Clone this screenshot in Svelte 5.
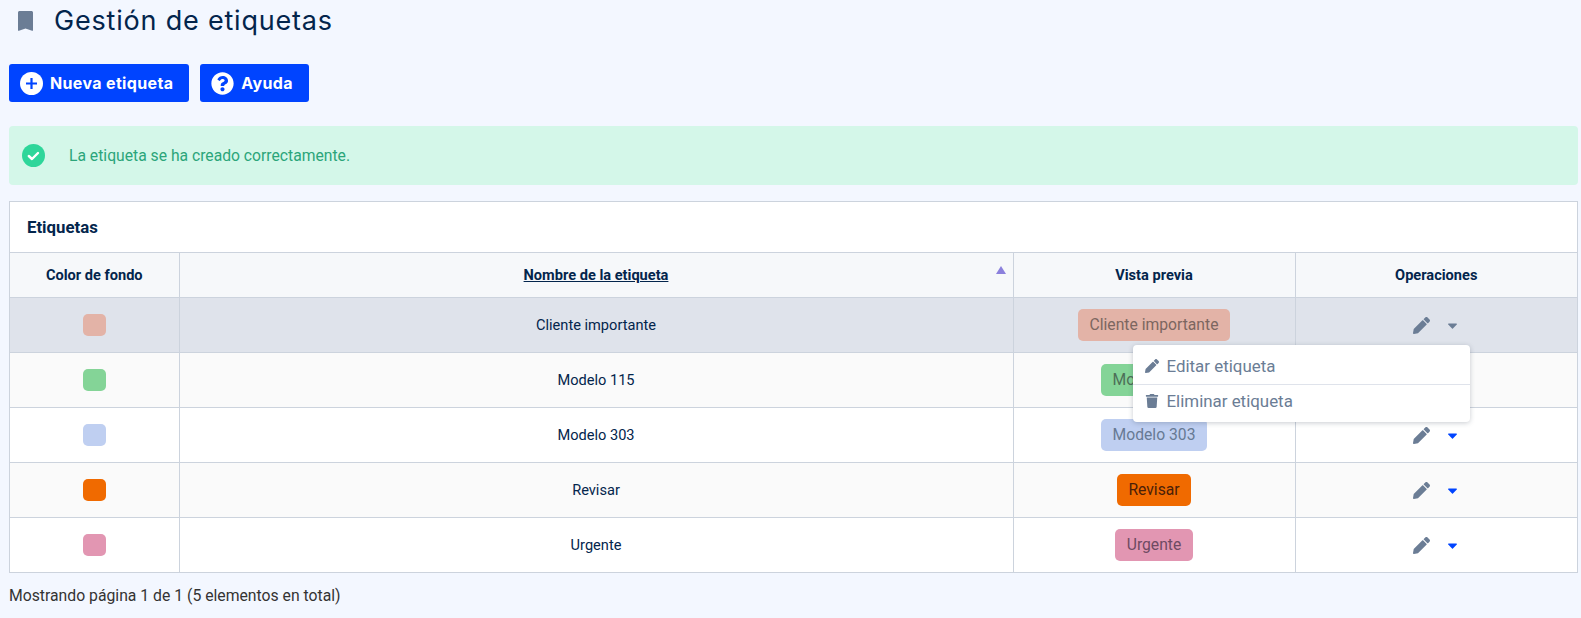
<script>
  const rows = [
    { name: 'Cliente importante', bg: '#e3b3a7', fg: '#7c6660', cls: 'active' },
    { name: 'Modelo 115', bg: '#84d497', fg: '#4d6f58', cls: 'alt' },
    { name: 'Modelo 303', bg: '#bfcff1', fg: '#677a94', cls: '' },
    { name: 'Revisar', bg: '#f06a00', fg: '#4a2008', cls: 'alt' },
    { name: 'Urgente', bg: '#e296b2', fg: '#6e4a62', cls: '' }
  ];
  const pencil = 'M497.9 142.1l-46.1 46.1c-4.7 4.7-12.3 4.7-17 0l-111-111c-4.7-4.7-4.7-12.3 0-17l46.1-46.1c18.7-18.7 49.1-18.7 67.9 0l60.1 60.1c18.8 18.7 18.8 49.1 0 67.9zM284.2 99.8L21.6 362.4.4 483.9c-2.9 16.4 11.4 30.6 27.8 27.8l121.5-21.3 262.6-262.6c4.7-4.7 4.7-12.3 0-17l-111-111c-4.8-4.7-12.4-4.7-17.1 0z';
</script>

<div class="page">
  <header class="title">
    <svg class="bookmark" viewBox="0 0 384 512"><path d="M0 490V40C0 18 18 0 40 0h304c22 0 40 18 40 40v450c0 14-10 22-24 14L192 450 24 504c-14 8-24 0-24-14z" /></svg>
    <h1>Gestión de etiquetas</h1>
  </header>

  <div class="actions">
    <button class="btn">
      <svg viewBox="0 0 23 23"><circle cx="11.5" cy="11.5" r="11.5" /><path class="cut" d="M11.5 6v11M6 11.5h11" /></svg>
      Nueva etiqueta
    </button>
    <button class="btn help">
      <svg viewBox="0 0 512 512"><path d="M504 256c0 136.997-111.043 248-248 248S8 392.997 8 256C8 119.083 119.043 8 256 8s248 111.083 248 248zM262.655 90c-54.497 0-89.255 22.957-116.549 63.758-3.536 5.286-2.353 12.415 2.715 16.258l34.699 26.31c5.205 3.947 12.621 3.008 16.665-2.122 17.864-22.658 30.113-35.797 57.303-35.797 20.429 0 45.698 13.148 45.698 32.958 0 14.976-12.363 22.667-32.534 33.976C247.128 238.528 216 254.941 216 296v4c0 6.627 5.373 12 12 12h56c6.627 0 12-5.373 12-12v-1.333c0-28.462 83.186-29.647 83.186-106.667 0-58.002-60.165-102-116.531-102zM256 338c-25.365 0-46 20.635-46 46 0 25.364 20.635 46 46 46s46-20.636 46-46c0-25.365-20.635-46-46-46z" /></svg>
      Ayuda
    </button>
  </div>

  <div class="alert">
    <svg viewBox="0 0 23 23"><circle cx="11.5" cy="11.5" r="11.5" /><path class="tick" d="M6.8 12l3.2 3 6-6" /></svg>
    <span>La etiqueta se ha creado correctamente.</span>
  </div>

  <section class="card">
    <h2>Etiquetas</h2>
    <table>
      <colgroup>
        <col class="c1" /><col /><col class="c3" /><col class="c4" />
      </colgroup>
      <thead>
        <tr>
          <th>Color de fondo</th>
          <th class="sorted"><u>Nombre de la etiqueta</u><i class="sort"></i></th>
          <th>Vista previa</th>
          <th>Operaciones</th>
        </tr>
      </thead>
      <tbody>
        {#each rows as r, i}
          <tr class={r.cls}>
            <td><span class="swatch" style:background={r.bg}></span></td>
            <td>{r.name}</td>
            <td><span class="tag" style:background={r.bg} style:color={r.fg}>{r.name}</span></td>
            <td class="ops">
              <div class="ops-inner">
                <svg class="pencil" viewBox="0 0 512 512"><path d={pencil} /></svg>
                <svg class="caret" viewBox="10 185 300 175"><path d="M31.3 192h257.3c17.8 0 26.7 21.5 14.1 34.1L174.1 354.8c-7.8 7.8-20.5 7.8-28.3 0L17.2 226.1C4.6 213.5 13.5 192 31.3 192z" /></svg>
              </div>
              {#if i === 0}
                <div class="menu">
                  <div class="item">
                    <svg viewBox="0 0 512 512"><path d={pencil} /></svg>
                    Editar etiqueta
                  </div>
                  <div class="item">
                    <svg viewBox="0 0 448 512"><path d="M432 32H312l-9.4-18.7A24 24 0 0 0 281.1 0H166.8a23.72 23.72 0 0 0-21.4 13.3L136 32H16A16 16 0 0 0 0 48v32a16 16 0 0 0 16 16h416a16 16 0 0 0 16-16V48a16 16 0 0 0-16-16zM53.2 467a48 48 0 0 0 47.9 45h245.8a48 48 0 0 0 47.9-45L416 128H32z" /></svg>
                    Eliminar etiqueta
                  </div>
                </div>
              {/if}
            </td>
          </tr>
        {/each}
      </tbody>
    </table>
  </section>

  <p class="foot">Mostrando página 1 de 1 (5 elementos en total)</p>
</div>

<style>
  :global(body) {
    margin: 0;
    background: #f3f7ff;
    font-family: Roboto, "Liberation Sans", sans-serif;
    color: #03254c;
  }
  .page {
    padding: 0 3px 0 9px;
    height: 618px;
    box-sizing: border-box;
    overflow: hidden;
  }
  .title {
    display: flex;
    align-items: center;
    height: 42px;
    padding-left: 9px;
  }
  .bookmark {
    width: 15px;
    height: 20px;
    fill: #6b7d95;
  }
  h1 {
    margin: 0 0 0 21px;
    font-family: Inter, sans-serif;
    font-size: 27px;
    letter-spacing: 0.8px;
    font-weight: 400;
    color: #03254c;
    line-height: 40px;
  }
  .actions {
    display: flex;
    gap: 11px;
    margin-top: 22px;
  }
  .btn {
    display: flex;
    align-items: center;
    gap: 7px;
    height: 38px;
    padding: 0 16px 0 11px;
    border: 0;
    border-radius: 3px;
    background: #0044ff;
    color: #fff;
    font-family: Inter, sans-serif;
    font-size: 16px;
    letter-spacing: 0.35px;
    font-weight: 700;
  }
  .btn svg {
    width: 23px;
    height: 23px;
    fill: #fff;
  }
  .cut {
    fill: none;
    stroke: #0044ff;
    stroke-width: 2.2;
  }
  .alert {
    display: flex;
    align-items: center;
    height: 59px;
    margin-top: 24px;
    padding-left: 13px;
    border-radius: 4px;
    background: #d4f7e9;
    color: #2ba57a;
    font-size: 15.7px;
  }
  .alert svg {
    width: 23px;
    height: 23px;
    fill: #2ed69a;
  }
  .tick {
    fill: none;
    stroke: #fff;
    stroke-width: 2.4;
    stroke-linecap: round;
    stroke-linejoin: round;
  }
  .alert span {
    margin-left: 24px;
  }
  .card {
    margin-top: 16px;
    border: 1px solid #ccd3dd;
    background: #fff;
  }
  h2 {
    margin: 0;
    height: 50px;
    padding-left: 17px;
    font-size: 16.8px;
    font-weight: 700;
    line-height: 51px;
    color: #03254c;
  }
  table {
    width: 100%;
    table-layout: fixed;
    border-collapse: collapse;
    font-size: 14.6px;
  }
  .c1 { width: 169px; }
  .c3 { width: 282px; }
  .c4 { width: 282px; }
  th, td {
    border-top: 1px solid #ccd3dd;
    border-left: 1px solid #ccd3dd;
    padding: 0;
    text-align: center;
  }
  th:first-child, td:first-child { border-left: 0; }
  th {
    height: 44px;
    background: #f6f8fa;
    font-weight: 700;
    font-size: 14.6px;
  }
  .sorted { position: relative; }
  .sort {
    position: absolute;
    right: 7px;
    top: 13px;
    border-left: 5px solid transparent;
    border-right: 5px solid transparent;
    border-bottom: 8px solid #8b80dc;
  }
  td { height: 54px; }
  tr.alt td { background: #fafafa; }
  tr.active td { background: #dfe3eb; }
  .swatch {
    display: block;
    width: 23px;
    height: 22px;
    margin: 0 auto;
    border-radius: 5px;
  }
  .tag {
    display: inline-block;
    padding: 0 11.5px;
    height: 32px;
    line-height: 32px;
    border-radius: 5px;
    font-size: 15.7px;
  }
  .ops { position: relative; }
  .ops-inner {
    display: flex;
    justify-content: center;
    align-items: center;
    gap: 18px;
    padding-right: 3px;
  }
  .pencil {
    width: 17px;
    height: 17px;
    fill: #6b7d95;
  }
  .caret {
    width: 9px;
    height: 6px;
    margin-top: 2px;
    fill: #0044ff;
  }
  tr.active .caret { fill: #6b7d95; }
  .menu {
    position: absolute;
    z-index: 2;
    left: -163px;
    top: 47px;
    width: 337px;
    height: 77px;
    background: #fff;
    border-radius: 4px;
    box-shadow: 0 1px 5px rgba(40, 50, 70, 0.25);
    color: #6b7d95;
    font-size: 16.9px;
    text-align: left;
  }
  .item {
    display: flex;
    align-items: center;
    height: 39px;
    padding: 3px 0 0 12px;
    box-sizing: border-box;
  }
  .item + .item {
    height: 38px;
    padding: 0 0 6px 12px;
    border-top: 1px solid #dfe3eb;
  }
  .item svg {
    width: 14px;
    height: 14px;
    margin-right: 8px;
    fill: #6b7d95;
  }
  .foot {
    margin: 13px 0 0;
    font-size: 15.75px;
    color: #333;
  }
</style>
